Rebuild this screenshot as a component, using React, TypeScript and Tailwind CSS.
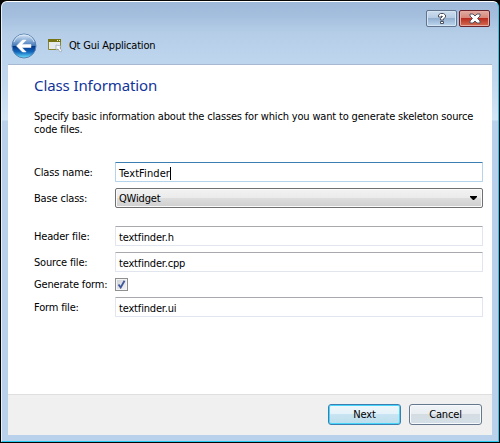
import type { ReactNode } from "react";

function BackIcon() {
  return (
    <svg width="26" height="26" viewBox="0 0 26 26">
      <defs>
        <linearGradient id="orb" x1="0" y1="0" x2="0" y2="1">
          <stop offset="0" stopColor="#dce9f6" />
          <stop offset=".25" stopColor="#8fb2da" />
          <stop offset=".48" stopColor="#4679b8" />
          <stop offset=".52" stopColor="#06388a" />
          <stop offset=".75" stopColor="#1267bd" />
          <stop offset="1" stopColor="#6ae4ff" />
        </linearGradient>
      </defs>
      <circle cx="13" cy="13" r="12" fill="url(#orb)" stroke="#5b82b0" />
      <path d="M3 9C5 3 10 2 13 2s8 1 10 7" fill="none" stroke="#edf6ff" strokeOpacity=".7" />
      <path d="M5.5 13 11.5 7h3.7l-4.3 4.5H20v3H10.9l4.3 4.5h-3.7Z" fill="#fff" stroke="#fff" strokeWidth=".5" />
    </svg>
  );
}

function FormIcon() {
  return (
    <svg width="15" height="14" viewBox="0 0 15 14">
      <path d="M.5.5h12v10H.5z" fill="#e6eaee" stroke="#8a862c" />
      <path d="M0 0h13v3H0z" fill="#777416" />
      <path d="M9 1h1v1H9zm2 0h1v1h-1z" fill="#eeeec0" />
      <path d="m8 6 5 1-1 2 2 3-2 1-2-3-2 1Z" fill="#f7f9fc" stroke="#8b97a5" strokeWidth=".6" />
    </svg>
  );
}

function Row({ label, children, className }: { label: string; children: ReactNode; className: string }) {
  return (
    <div className={`flex items-center ${className}`}>
      <span className="w-[81px] shrink-0 whitespace-nowrap">{label}</span>
      {children}
    </div>
  );
}

function Field({ value, focused = false }: { value: string; focused?: boolean }) {
  return (
    <div
      className={`flex h-5 w-[368px] items-center rounded-[1px] border bg-white pl-[3px] pt-[2px] ${
        focused ? "border-[#b5d3eb] border-t-[#3b7eb2] tracking-[0.08px]" : "border-[#e0e5ee] border-t-[#a7a9af]"
      }`}
    >
      <span>{value}</span>
      {focused && <span className="h-[13px] w-px bg-black" />}
    </div>
  );
}

export default function App() {
  return (
    <div className="h-[443px] w-[500px] overflow-hidden bg-[#050505] p-px font-['DejaVu_Sans_Condensed','DejaVu_Sans',sans-serif] text-[11px] leading-[13px] tracking-[-0.17px] text-black [font-stretch:condensed]">
      <div className="flex h-[441px] flex-col rounded-t-[6px] border border-b-[#28c9ef] border-l-[#e5f2fb] border-r-[#28c9ef] border-t-white bg-[#b9d1ea] bg-[linear-gradient(180deg,#9db8d8_0px,#a5c0df_15px,#b5cde7_31px,#bdd5ed_58px,#c2d8ee_80px,#d3e4f5_118px,#b9d1ea_119px)] px-[6px]">
        <header className="h-[62px]">
          <div className="flex justify-end gap-[2px] pr-[2px] pt-2">
            <button className="flex h-[17px] w-[31px] items-center justify-center rounded-[2px] border border-[#62738e] bg-[linear-gradient(#cedded_0%,#b4cbe4_48%,#94b0d0_50%,#bbd7ef_100%)] shadow-[inset_0_0_0_1px_#d6e5f4]">
              <svg width="10" height="13" viewBox="0 0 10 13">
                <path d="M1.5 5V3l2-1.5h3L8.5 3v2L6.5 7v1h-3V6.5L5.5 4.5 5 4h-.5v1ZM3.5 9.5h3v2h-3z" fill="#fff" stroke="#4b5060" />
              </svg>
            </button>
            <button className="flex h-[17px] w-[31px] items-center justify-center rounded-[2px] border border-[#68232d] bg-[linear-gradient(#dfaba1_0%,#d88578_47%,#b82d20_50%,#d56c51_100%)] shadow-[inset_0_0_0_1px_#e7aaa0]">
              <svg width="12" height="11" viewBox="0 0 12 11">
                <path d="M1 1h3l2 2 2-2h3v2L8.5 5.5 11 8v2H8L6 8l-2 2H1V8l2.5-2.5L1 3Z" fill="#fff" stroke="#555463" />
              </svg>
            </button>
          </div>
          <div className="flex h-[37px] items-center pl-[3px]">
            <BackIcon />
            <div className="ml-[11px]"><FormIcon /></div>
            <span className="ml-[6px] text-[11px] leading-[14px] tracking-[-0.2px]">Qt Gui Application</span>
          </div>
        </header>
        <main className="h-[330px] border-t border-[#a7b9d0] bg-white pl-[26px]">
          <h1 className="pt-[9px] font-['Noto_Sans',sans-serif] text-[15px] leading-[22px] tracking-[-0.1px] text-[#123499]">Class Information</h1>
          <p className="mt-[14px] whitespace-nowrap">Specify basic information about the classes for which you want to generate skeleton source<br />code files.</p>
          <form className="mt-[26px]">
            <Row label="Class name:" className="h-5"><Field value="TextFinder" focused /></Row>
            <Row label="Base class:" className="mt-[6px] h-5">
              <div className="flex h-5 w-[368px] items-center justify-between rounded-[2px] border border-[#707070] bg-[linear-gradient(#f2f2f2_0%,#ebebeb_48%,#dddddd_50%,#cfcfcf_100%)] pl-[3px] pr-[5px] shadow-[inset_0_0_0_1px_#fafafa]">
                <span>QWidget</span>
                <svg width="7" height="4" viewBox="0 0 7 4"><path d="M0 0h7v1L4 4H3L0 1Z" /></svg>
              </div>
            </Row>
            <Row label="Header file:" className="mt-[18px] h-5"><Field value="textfinder.h" /></Row>
            <Row label="Source file:" className="mt-[6px] h-5"><Field value="textfinder.cpp" /></Row>
            <Row label="Generate form:" className="mt-[6px] h-[13px]">
              <span className="flex h-[13px] w-[13px] items-center justify-center border border-[#8e8f8f] bg-[linear-gradient(135deg,#cbd0d7,#f7f7f7)] shadow-[inset_0_0_0_1px_#f4f4f4]">
                <svg width="9" height="9" viewBox="0 0 9 9"><path d="m1.5 4.5 2.2 3L7.5.8" fill="none" stroke="#40569c" strokeWidth="1.8" /></svg>
              </span>
            </Row>
            <Row label="Form file:" className="mt-[6px] h-5"><Field value="textfinder.ui" /></Row>
          </form>
        </main>
        <footer className="flex h-[41px] justify-end gap-2 border-t border-[#dfdfdf] bg-[#f0f0f0] pr-[10px] pt-[9px]">
          <button className="h-[21px] w-[73px] rounded-[3px] border border-[#3b7eaf] bg-[linear-gradient(#eef7fb_0%,#e4f2f9_48%,#c9e4f2_50%,#bbdeed_100%)] shadow-[inset_0_0_0_1px_#48d5fa]">Next</button>
          <button className="h-[21px] w-[73px] rounded-[3px] border border-[#66788d] bg-[linear-gradient(#f0f4f7_0%,#e8edf1_48%,#d5dde3_50%,#d4dfe7_100%)] shadow-[inset_0_0_0_1px_#f7fafc]">Cancel</button>
        </footer>
      </div>
    </div>
  );
}
